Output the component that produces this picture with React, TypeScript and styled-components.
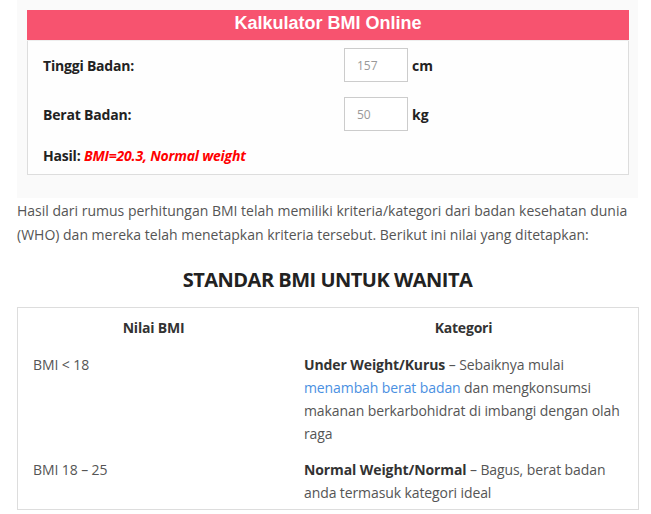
import styled, { createGlobalStyle } from "styled-components";

const GlobalStyle = createGlobalStyle`
  body {
    margin: 0;
    background: #ffffff;
    font-family: "Open Sans", "Noto Sans", sans-serif;
    color: #555555;
  }
`;

const Page = styled.div`
  width: 651px;
  padding: 0 13px 0 17px;
  box-sizing: border-box;
`;

const CalcWrap = styled.div`
  background: #fafafa;
  padding: 10px 10px 23px 10px;
`;

const CalcBox = styled.div`
  width: 602px;
  border: 1px solid #dddddd;
  border-top: none;
  background: #fefefe;
  box-sizing: border-box;
`;

const CalcHeader = styled.div`
  background: #f7536f;
  color: #ffffff;
  font-family: "Liberation Sans", Arial, sans-serif;
  font-weight: bold;
  font-size: 18px;
  height: 30px;
  line-height: 27px;
  text-align: center;
  margin: 0 -1px;
  border-bottom: 1px solid #eeeeee;
`;

const Form = styled.div`
  padding: 7px 15px 9px 15px;
`;

const Row = styled.div`
  display: grid;
  grid-template-columns: 301px auto auto;
  justify-content: start;
  align-items: center;
  margin-bottom: 15px;
`;

const Label = styled.span`
  font-weight: bold;
  font-size: 14px;
  color: #222222;
  letter-spacing: -0.2px;
`;

const Input = styled.input`
  width: 64px;
  height: 34px;
  box-sizing: border-box;
  border: 1px solid #cccccc;
  background: #ffffff;
  padding: 0 0 0 12px;
  font-family: "Open Sans", sans-serif;
  font-size: 12px;
  color: #999999;
  outline: none;
`;

const Unit = styled.span`
  font-weight: bold;
  font-size: 14px;
  color: #222222;
  margin-left: 4px;
`;

const Result = styled.div`
  font-size: 14px;
  font-weight: bold;
  color: #222222;
  margin-top: 4px;
  letter-spacing: -0.2px;
`;

const ResultValue = styled.span`
  color: #ff0000;
  font-style: italic;
`;

const Intro = styled.p`
  font-size: 14px;
  line-height: 24px;
  margin: 1px 0 0 0;
  color: #555555;
`;

const Heading = styled.h2`
  text-align: center;
  font-size: 20px;
  font-weight: bold;
  color: #222222;
  margin: 18px 0 12px 0;
  line-height: 30px;
  letter-spacing: -0.5px;
`;

const Table = styled.table`
  width: 622px;
  border: 1px solid #dddddd;
  border-collapse: collapse;
  font-size: 14px;
  color: #555555;
`;

const Th = styled.th`
  font-weight: bold;
  color: #333333;
  padding: 10px 15px 7px 15px;
  text-align: center;
  line-height: 20px;
  letter-spacing: -0.2px;
`;

const Td = styled.td<{ $w?: number }>`
  vertical-align: top;
  padding: 8px 10px 5px 15px;
  line-height: 23px;
  letter-spacing: -0.1px;
  width: ${(p) => (p.$w ? `${p.$w}px` : "auto")};
`;

const Strong = styled.strong`
  color: #333333;
`;

const Link = styled.a`
  color: #4a90e2;
  text-decoration: none;
`;

export default function App() {
  return (
    <>
      <GlobalStyle />
      <Page>
        <CalcWrap>
          <CalcBox>
            <CalcHeader>Kalkulator BMI Online</CalcHeader>
            <Form>
              <Row>
                <Label>Tinggi Badan:</Label>
                <Input defaultValue="157" />
                <Unit>cm</Unit>
              </Row>
              <Row>
                <Label>Berat Badan:</Label>
                <Input defaultValue="50" />
                <Unit>kg</Unit>
              </Row>
              <Result>
                Hasil: <ResultValue>BMI=20.3, Normal weight</ResultValue>
              </Result>
            </Form>
          </CalcBox>
        </CalcWrap>
        <Intro>
          Hasil dari rumus perhitungan BMI telah memiliki kriteria/kategori dari badan kesehatan dunia
          (WHO) dan mereka telah menetapkan kriteria tersebut. Berikut ini nilai yang ditetapkan:
        </Intro>
        <Heading>STANDAR BMI UNTUK WANITA</Heading>
        <Table>
          <thead>
            <tr>
              <Th>Nilai BMI</Th>
              <Th>Kategori</Th>
            </tr>
          </thead>
          <tbody>
            <tr>
              <Td $w={246}>BMI &lt; 18</Td>
              <Td>
                <Strong>Under Weight/Kurus</Strong> – Sebaiknya mulai{" "}
                <Link href="#">menambah berat badan</Link> dan mengkonsumsi makanan berkarbohidrat di
                imbangi dengan olah raga
              </Td>
            </tr>
            <tr>
              <Td $w={246}>BMI 18 – 25</Td>
              <Td>
                <Strong>Normal Weight/Normal</Strong> – Bagus, berat badan anda termasuk kategori ideal
              </Td>
            </tr>
          </tbody>
        </Table>
      </Page>
    </>
  );
}
